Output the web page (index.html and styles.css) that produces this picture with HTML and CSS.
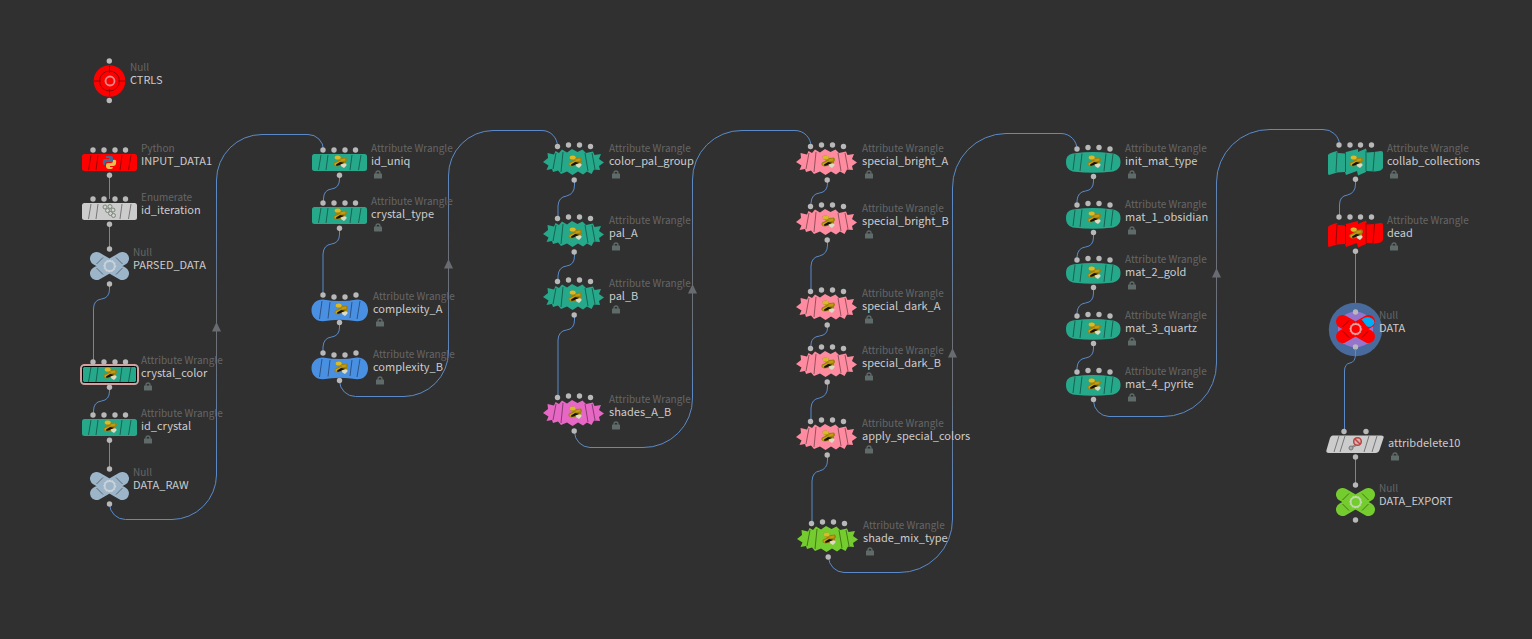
FILE: index.html
```html
<!DOCTYPE html>
<html lang="en">
<head>
<meta charset="utf-8">
<title>Node network</title>
<link rel="stylesheet" href="styles.css">
</head>
<body>
<svg class="defs" aria-hidden="true">
  <defs>
    <linearGradient id="fade" x1="0" y1="0" x2="0" y2="1">
      <stop offset="0.15" stop-color="#5a8ac8"/>
      <stop offset="0.45" stop-color="#6c7079"/>
      <stop offset="0.58" stop-color="#6c7079"/>
      <stop offset="0.85" stop-color="#5a8ac8"/>
    </linearGradient>

    <g id="hat">
      <path d="M-4.500-5.500Q-2-7.500 1.500-5.500L2-4 7-4.500Q9-2 7-.5L7 2 1 4-3 4.500Q-7 3-5 .5L-1-1.500-4-3Z" fill="#9c8010"/>
      <ellipse cx="-1.300" cy="-4.500" rx="3" ry="2" fill="#d9bb2a"/>
      <path d="M-4.500 1.500L1-1 2 .5-2 3.500Q-5 4-4.500 1.500Z" fill="#c9a514"/>
      <path d="M1-2.500L6-3.500 6.500-1.500 2-.5Z" fill="#c39a12"/>
      <path d="M-3 2.500L1 0 5 .8 1 3-2.500 4Z" fill="#171204"/>
      <path d="M1.500 2.500L6 1.200Q8.500 2 7 4L5 6 2.500 4.500Z" fill="#dcdcc4"/>
    </g>
    <g id="python">
      <path d="M-2-6H2Q4-6 4-4V-1Q4 0 2 0H-2Q-4 0-4 2V3Q-7 3-6-1-6-3-4-3H0V-4H-3Q-4-6-2-6Z" fill="#3f6d97"/>
      <path d="M4-2Q8-3 7 1 7 4 4 4H1V5H4Q4 7 2 7H0Q-3 7-3 4V3Q-3 1-1 1H2Q4 1 4-1Z" fill="#e8c14a"/>
    </g>
    <g id="boxes" fill="#d0d5cd" stroke="#7c857c">
      <circle cx="-4" cy="-4" r="2"/><circle cx="1" cy="-4.500" r="2"/><circle cx="-1.500" cy="-.5" r="2"/><circle cx="4" cy="-1" r="2"/><circle cx="1.500" cy="2.500" r="2"/><circle cx="4.500" cy="4.500" r="2"/>
    </g>

    <g id="four-in" fill="#b8b8b8">
      <circle cx="-16" cy="-12" r="2.700"/><circle cx="-5" cy="-12" r="2.700"/><circle cx="6" cy="-12" r="2.700"/><circle cx="16.500" cy="-12" r="2.700"/>
    </g>
    <g id="four-arc" fill="#b8b8b8">
      <circle cx="-16.500" cy="-15.500" r="2.700"/><circle cx="-5.500" cy="-17" r="2.700"/><circle cx="5.500" cy="-17" r="2.700"/><circle cx="16.500" cy="-15.500" r="2.700"/>
    </g>
    <g id="null-dots" fill="#b8b8b8">
      <circle cx=".5" cy="-17" r="2.700"/><circle cx=".5" cy="18" r="2.700"/>
    </g>

    <g id="bar">
      <rect x="-27" y="-8" width="55" height="17" rx="2.500" fill="currentColor"/>
      <path class="seam" d="M-18-7L-20.500 8M-11-7L-13 8M13-7L11 8M22-7L19.500 8"/>
      <use href="#four-in"/>
      <circle cx=".5" cy="13.200" r="2.700" fill="#b8b8b8"/>
    </g>
    <g id="capsule">
      <path d="M-17-10.500Q0-7.500 17-10.500C24-10.500 28-6 28 .3S24 11.500 17 11.300Q0 8-17 11.300C-24 11.500-28.500 6.500-28.500 .3S-24-10.500-17-10.500Z" fill="currentColor"/>
      <path class="seam" d="M-18-9L-20.500 9M-10-8L-12 8.500M12-8L10 8M20-9L17 9"/>
      <g fill="#b8b8b8"><circle cx="-17" cy="-15" r="2.700"/><circle cx="-6" cy="-13" r="2.700"/><circle cx="5" cy="-13" r="2.700"/><circle cx="16" cy="-15" r="2.700"/><circle cx="-.5" cy="12.500" r="2.700"/></g>
    </g>
    <g id="jagged">
      <path d="M-31 0L-26-4-26.500-9-20-7.500-18.500-11-15-9-12-12.500-7-9.500-2-13 3.500-10 8.500-12.500 12-9 19-10.500 20.500-7 27-8 25-3 30 .5 25 4 26 8 20 7.500 17.500 12 13 9.500 9 12.500 4 9.500-1.500 13-7 9.500-13 12-16 8.500-21 10-22 7-27.500 8-25.500 3.500Z" fill="currentColor"/>
      <path class="seam" d="M-18-9L-21 7M-11-10L-13 10M11-9L14 9M18-9L21 7"/>
      <use href="#four-arc"/>
      <circle cx=".2" cy="18" r="2.700" fill="#b8b8b8"/>
    </g>
    <g id="barrel">
      <path d="M-27 0C-27-6-24-8-18-8.800Q0-11 18-8.800C24-8 27.500-6 27.500 0S24 9 18 9.800Q0 11.500-18 9.800C-24 9-27 6-27 0Z" fill="currentColor"/>
      <path class="seam" d="M-18-8L-20 8M-11-8.500L-13 9M13-8.500L11 9M20-8L18 8"/>
      <g fill="#b8b8b8"><circle cx="-16" cy="-13" r="2.700"/><circle cx="-5" cy="-14.500" r="2.700"/><circle cx="6" cy="-14.500" r="2.700"/><circle cx="17" cy="-13" r="2.700"/><circle cx=".5" cy="14.500" r="2.700"/></g>
    </g>
    <g id="cracked">
      <path d="M-27-7Q-26-9-18-11L-17-9-10-8.500-9-10 3-13 3-10 11-13.500 12-9.500 19-10 26-11Q28-11 28-9V6Q27 9 20 9.500L11 9 11 10 3 13.500 2 9-9 13-10 10-18 10.500-26 13Q-27 13-27 11Z" fill="currentColor"/>
      <path class="seam" d="M-18-10L-19 10M-9.500-9V10M11-11V9M19.500-10L18 9"/>
      <g fill="#b8b8b8"><circle cx="-16" cy="-17" r="2.700"/><circle cx="-5" cy="-17" r="2.700"/><circle cx="5.500" cy="-17" r="2.700"/><circle cx="16.500" cy="-17" r="2.700"/><circle cx=".5" cy="17.300" r="2.700"/></g>
    </g>
    <g id="slanted">
      <path d="M-22.500-8.500H26Q29.500-8.500 28.500-6L24.500 6Q23.500 9 20.500 9H-26Q-29.500 9-28.500 6L-25-6Q-24-8.500-22.500-8.500Z" fill="currentColor"/>
      <path class="seam" d="M-16-8L-21 8M-10-8L-15 8M14-8L9 8M22-8L17 8"/>
      <g fill="#b8b8b8"><circle cx="-11" cy="-12.500" r="2.700"/><circle cx="11" cy="-12.500" r="2.700"/><circle cx=".5" cy="13" r="2.700"/></g>
      <path d="M-3 3L1 1" stroke="#8a8a8a" stroke-width="2"/>
      <circle cx="-4" cy="4" r="2" fill="#aaa" stroke="#777"/>
      <path d="M-2-6H6L7-1 4 2-2 0Z" fill="#ddb0b0"/>
      <circle cx="2.500" cy="-2.500" r="3.800" fill="none" stroke="#b84444" stroke-width="1.500"/>
      <path d="M0-5L5 0" stroke="#b84444" stroke-width="1.500"/>
    </g>
    <g id="cross">
      <path d="M-12.500-7.500L13.500 7.500M13.500-7.500L-12.500 7.500" stroke="currentColor" stroke-width="13" stroke-linecap="round"/>
      <path class="seam" d="M-12.500-2L-6-8.500M7-8.500L13.500-2M-12.500 2L-6 8.500M7 8.500L13.500 2"/>
      <circle cx=".7" cy="0" r="5" fill="none" stroke="#dadada" stroke-opacity=".75" stroke-width="1.800"/>
      <circle cx=".7" cy="0" r="6" fill="none" stroke="#fff" stroke-opacity=".35" stroke-dasharray="1.500 1.500"/>
      <use href="#null-dots"/>
    </g>
    <g id="target">
      <circle cx=".5" cy="0" r="15.800" fill="currentColor"/>
      <circle class="seam" cx=".5" cy="0" r="10"/>
      <path class="seam" d="M.5-15V-8M.5 8V15M-15 0H-8M9 0H16"/>
      <circle cx="1" cy="0" r="4.500" fill="none" stroke="#e88a8a" stroke-width="1.800"/>
      <g fill="#b8b8b8"><circle cx=".3" cy="-20" r="2.700"/><circle cx=".3" cy="19.500" r="2.700"/></g>
    </g>
    <g id="lock">
      <path d="M2 4V3Q2 1 4 1T6 3V4" fill="none" stroke="#5f6b68" stroke-width="1.300"/>
      <rect x="0" y="3.500" width="8" height="5" rx=".6" fill="#5f6b68"/>
    </g>
  </defs>
</svg>

<main class="network">
  <svg class="wires" aria-hidden="true">
    <g class="wire">
      <path d="M109.500 175V199M109.500 224V249M109.500 440V469"/>
      <path d="M109.500 284v5q0 9-8 10q-8 1-8 10V362"/>
      <path d="M109.500 387v4q0 9-8 10q-8 1-8 10V415"/>
      <path d="M339.500 175v4q0 9-8 10q-8 1-8 10V203"/>
      <path d="M339.500 228v6q0 9-8 10q-8 1-8.500 10V295"/>
      <path d="M339.500 323v4q0 9-8 10q-8 1-8.500 10V353"/>
      <path d="M574.500 180v5q0 9-8 11q-8 1-8.500 10V218"/>
      <path d="M574.500 252v4q0 9-8 10q-8 1-8.500 10V281"/>
      <path d="M574.500 315v5q0 9-8 10q-8 1-8.500 10V398"/>
      <path d="M827.500 180v3q0 9-8 10q-8 1-8.500 10V207"/>
      <path d="M827.500 240v5q0 9-8 11q-8 1-8.500 10V291"/>
      <path d="M827.500 325v3q0 7-8 8q-8 1-8.500 8V348"/>
      <path d="M827.500 382v5q0 9-8 11q-8 1-8.500 10V421"/>
      <path d="M827.500 455v5q0 9-8 11q-7 1-7.500 10V523"/>
      <path d="M1093.500 177v4q0 9-8 10q-8 1-8.500 10V205"/>
      <path d="M1093.500 233v4q0 9-8 10q-8 1-8.500 10V261"/>
      <path d="M1093.500 289v4q0 9-8 10q-8 1-8.500 10V317"/>
      <path d="M1093.500 344v4q0 9-8 10q-8 1-8.500 10V373"/>
      <path d="M1355.500 179v5q0 9-8 11q-8 1-8 10V217"/>
      <path d="M1355.500 252V313M1355.500 457V486"/>
    </g>
    <g class="wire loop">
      <path d="M109.500 504A16 16 0 0 0 125.500 519.500H172A45 45 0 0 0 216.500 475V180A45.500 46 0 0 1 262 134.500H308A15.500 15.500 0 0 1 323.500 150"/>
      <path d="M339.500 381A16 16 0 0 0 355.500 396.500H404A45 45 0 0 0 448.500 352V176A45 45 0 0 1 493 130.500H542A15.500 16 0 0 1 557.500 147"/>
      <path d="M574.500 432A16 16 0 0 0 590 447.500H643A49 49 0 0 0 692.500 398V180A49 49 0 0 1 742 130.500H795A16 16 0 0 1 811 147"/>
      <path d="M828.500 557A16 16 0 0 0 844 572.500H899A53 53 0 0 0 952.500 519V188A54 54 0 0 1 1006 133.500H1061A16 16 0 0 1 1077 150"/>
      <path d="M1093.500 401A16 16 0 0 0 1109 416.500H1163A53 53 0 0 0 1216.500 363V182A53 53 0 0 1 1270 129.500H1323A16 16 0 0 1 1339.500 145"/>
    </g>
    <path class="arrow" d="M212 331.500L216.500 322 221 331.500ZM444 268.500L448.500 259 453 268.500ZM688 293.500L692.500 284 697 293.500ZM948 357.500L952.500 348 957 357.500ZM1212 277.500L1216.500 268 1221 277.500Z"/>
  </svg>

  <div class="node target red" style="left:109px;top:81px"><svg class="shape" viewBox="-40 -30 80 60"><use href="#target"/></svg><div class="label"><span class="type">Null</span><span class="name">CTRLS</span></div></div>
  <div class="node bar red" style="left:109px;top:162px"><svg class="shape" viewBox="-40 -30 80 60"><use href="#bar"/><use href="#python"/></svg><div class="label"><span class="type">Python</span><span class="name">INPUT_DATA1</span></div></div>
  <div class="node bar silver" style="left:109px;top:211px"><svg class="shape" viewBox="-40 -30 80 60"><use href="#bar"/><use href="#boxes"/></svg><div class="label"><span class="type">Enumerate</span><span class="name">id_iteration</span></div></div>
  <div class="node cross steel" style="left:109px;top:266px"><svg class="shape" viewBox="-40 -30 80 60"><use href="#cross"/></svg><div class="label"><span class="type">Null</span><span class="name">PARSED_DATA</span></div></div>
  <div class="node bar green" style="left:109px;top:374px"><svg class="shape" viewBox="-40 -30 80 60"><rect x="-28" y="-9" width="57" height="19" rx="3.500" fill="#000" stroke="#d3a0a0" stroke-width="2"/><use href="#bar"/><rect x="-26.500" y="-7.500" width="54" height="16" rx="2" fill="none" stroke="#000"/><use href="#hat"/></svg><div class="label"><span class="type">Attribute Wrangle</span><span class="name">crystal_color</span><svg class="lock" viewBox="0 0 8 9"><use href="#lock"/></svg></div></div>
  <div class="node bar green" style="left:109px;top:427px"><svg class="shape" viewBox="-40 -30 80 60"><use href="#bar"/><use href="#hat"/></svg><div class="label"><span class="type">Attribute Wrangle</span><span class="name">id_crystal</span><svg class="lock" viewBox="0 0 8 9"><use href="#lock"/></svg></div></div>
  <div class="node cross steel" style="left:109px;top:486px"><svg class="shape" viewBox="-40 -30 80 60"><use href="#cross"/></svg><div class="label"><span class="type">Null</span><span class="name">DATA_RAW</span></div></div>

  <div class="node bar green" style="left:339px;top:162px"><svg class="shape" viewBox="-40 -30 80 60"><use href="#bar"/><use href="#hat"/></svg><div class="label"><span class="type">Attribute Wrangle</span><span class="name">id_uniq</span><svg class="lock" viewBox="0 0 8 9"><use href="#lock"/></svg></div></div>
  <div class="node bar green" style="left:339px;top:215px"><svg class="shape" viewBox="-40 -30 80 60"><use href="#bar"/><use href="#hat"/></svg><div class="label"><span class="type">Attribute Wrangle</span><span class="name">crystal_type</span><svg class="lock" viewBox="0 0 8 9"><use href="#lock"/></svg></div></div>
  <div class="node capsule blue" style="left:340px;top:310px"><svg class="shape" viewBox="-40 -30 80 60"><use href="#capsule"/><use href="#hat"/></svg><div class="label"><span class="type">Attribute Wrangle</span><span class="name">complexity_A</span><svg class="lock" viewBox="0 0 8 9"><use href="#lock"/></svg></div></div>
  <div class="node capsule blue" style="left:340px;top:368px"><svg class="shape" viewBox="-40 -30 80 60"><use href="#capsule"/><use href="#hat"/></svg><div class="label"><span class="type">Attribute Wrangle</span><span class="name">complexity_B</span><svg class="lock" viewBox="0 0 8 9"><use href="#lock"/></svg></div></div>

  <div class="node jagged green" style="left:574px;top:162px"><svg class="shape" viewBox="-40 -30 80 60"><use href="#jagged"/><use href="#hat"/></svg><div class="label"><span class="type">Attribute Wrangle</span><span class="name">color_pal_group</span><svg class="lock" viewBox="0 0 8 9"><use href="#lock"/></svg></div></div>
  <div class="node jagged green" style="left:574px;top:234px"><svg class="shape" viewBox="-40 -30 80 60"><use href="#jagged"/><use href="#hat"/></svg><div class="label"><span class="type">Attribute Wrangle</span><span class="name">pal_A</span><svg class="lock" viewBox="0 0 8 9"><use href="#lock"/></svg></div></div>
  <div class="node jagged green" style="left:574px;top:297px"><svg class="shape" viewBox="-40 -30 80 60"><use href="#jagged"/><use href="#hat"/></svg><div class="label"><span class="type">Attribute Wrangle</span><span class="name">pal_B</span><svg class="lock" viewBox="0 0 8 9"><use href="#lock"/></svg></div></div>
  <div class="node jagged magenta" style="left:574px;top:413px"><svg class="shape" viewBox="-40 -30 80 60"><use href="#jagged"/><use href="#hat"/></svg><div class="label"><span class="type">Attribute Wrangle</span><span class="name">shades_A_B</span><svg class="lock" viewBox="0 0 8 9"><use href="#lock"/></svg></div></div>

  <div class="node jagged pink" style="left:827px;top:162px"><svg class="shape" viewBox="-40 -30 80 60"><use href="#jagged"/><use href="#hat"/></svg><div class="label"><span class="type">Attribute Wrangle</span><span class="name">special_bright_A</span><svg class="lock" viewBox="0 0 8 9"><use href="#lock"/></svg></div></div>
  <div class="node jagged pink" style="left:827px;top:222px"><svg class="shape" viewBox="-40 -30 80 60"><use href="#jagged"/><use href="#hat"/></svg><div class="label"><span class="type">Attribute Wrangle</span><span class="name">special_bright_B</span><svg class="lock" viewBox="0 0 8 9"><use href="#lock"/></svg></div></div>
  <div class="node jagged pink" style="left:827px;top:307px"><svg class="shape" viewBox="-40 -30 80 60"><use href="#jagged"/><use href="#hat"/></svg><div class="label"><span class="type">Attribute Wrangle</span><span class="name">special_dark_A</span><svg class="lock" viewBox="0 0 8 9"><use href="#lock"/></svg></div></div>
  <div class="node jagged pink" style="left:827px;top:364px"><svg class="shape" viewBox="-40 -30 80 60"><use href="#jagged"/><use href="#hat"/></svg><div class="label"><span class="type">Attribute Wrangle</span><span class="name">special_dark_B</span><svg class="lock" viewBox="0 0 8 9"><use href="#lock"/></svg></div></div>
  <div class="node jagged pink" style="left:827px;top:437px"><svg class="shape" viewBox="-40 -30 80 60"><use href="#jagged"/><use href="#hat"/></svg><div class="label"><span class="type">Attribute Wrangle</span><span class="name">apply_special_colors</span><svg class="lock" viewBox="0 0 8 9"><use href="#lock"/></svg></div></div>
  <div class="node jagged lime" style="left:828px;top:539px"><svg class="shape" viewBox="-40 -30 80 60"><use href="#jagged"/><use href="#hat"/></svg><div class="label"><span class="type">Attribute Wrangle</span><span class="name">shade_mix_type</span><svg class="lock" viewBox="0 0 8 9"><use href="#lock"/></svg></div></div>

  <div class="node barrel green" style="left:1093px;top:162px"><svg class="shape" viewBox="-40 -30 80 60"><use href="#barrel"/><use href="#hat"/></svg><div class="label"><span class="type">Attribute Wrangle</span><span class="name">init_mat_type</span><svg class="lock" viewBox="0 0 8 9"><use href="#lock"/></svg></div></div>
  <div class="node barrel green" style="left:1093px;top:218px"><svg class="shape" viewBox="-40 -30 80 60"><use href="#barrel"/><use href="#hat"/></svg><div class="label"><span class="type">Attribute Wrangle</span><span class="name">mat_1_obsidian</span><svg class="lock" viewBox="0 0 8 9"><use href="#lock"/></svg></div></div>
  <div class="node barrel green" style="left:1093px;top:273px"><svg class="shape" viewBox="-40 -30 80 60"><use href="#barrel"/><use href="#hat"/></svg><div class="label"><span class="type">Attribute Wrangle</span><span class="name">mat_2_gold</span><svg class="lock" viewBox="0 0 8 9"><use href="#lock"/></svg></div></div>
  <div class="node barrel green" style="left:1093px;top:329px"><svg class="shape" viewBox="-40 -30 80 60"><use href="#barrel"/><use href="#hat"/></svg><div class="label"><span class="type">Attribute Wrangle</span><span class="name">mat_3_quartz</span><svg class="lock" viewBox="0 0 8 9"><use href="#lock"/></svg></div></div>
  <div class="node barrel green" style="left:1093px;top:385px"><svg class="shape" viewBox="-40 -30 80 60"><use href="#barrel"/><use href="#hat"/></svg><div class="label"><span class="type">Attribute Wrangle</span><span class="name">mat_4_pyrite</span><svg class="lock" viewBox="0 0 8 9"><use href="#lock"/></svg></div></div>

  <div class="node cracked green" style="left:1355px;top:162px"><svg class="shape" viewBox="-40 -30 80 60"><use href="#cracked"/><use href="#hat"/></svg><div class="label"><span class="type">Attribute Wrangle</span><span class="name">collab_collections</span><svg class="lock" viewBox="0 0 8 9"><use href="#lock"/></svg></div></div>
  <div class="node cracked red" style="left:1355px;top:234px"><svg class="shape" viewBox="-40 -30 80 60"><use href="#cracked"/><use href="#hat"/></svg><div class="label"><span class="type">Attribute Wrangle</span><span class="name">dead</span><svg class="lock" viewBox="0 0 8 9"><use href="#lock"/></svg></div></div>
  <div class="node cross red" style="left:1355px;top:329px"><svg class="shape" viewBox="-40 -30 80 60"><circle cx=".5" cy=".5" r="26.700" fill="#486a9c"/><path d="M.5-17.500Q10-17 18-9V10Q10 18 .5 18.500-9 18-17 10V-9Q-9-17 .5-17.500Z" fill="#9574cd"/><use href="#cross"/><path d="M6.500-9.500Q12-14 17-10.500T17-3Q14-1 11.500-3Z" fill="#00aef4"/></svg><div class="label"><span class="type">Null</span><span class="name">DATA</span></div></div>
  <svg class="wires" aria-hidden="true"><path class="wire" d="M1355.500 349v5q0 8-5.500 9-5.500 1-5.500 8V431"/></svg>
  <div class="node slanted silver untyped" style="left:1355px;top:444px"><svg class="shape" viewBox="-40 -30 80 60"><use href="#slanted"/></svg><div class="label"><span class="name">attribdelete10</span><svg class="lock" viewBox="0 0 8 9"><use href="#lock"/></svg></div></div>
  <div class="node cross lime" style="left:1355px;top:502px"><svg class="shape" viewBox="-40 -30 80 60"><use href="#cross"/></svg><div class="label"><span class="type">Null</span><span class="name">DATA_EXPORT</span></div></div>
</main>
</body>
</html>
```

FILE: styles.css
```css
body {
  margin: 0;
  background: #303030;
  font-family: "Noto Sans CJK SC", "Noto Sans", sans-serif;
  font-size: 11px;
  line-height: 12px;
}

.defs {
  position: absolute;
  width: 0;
  height: 0;
}

.network {
  position: relative;
  min-height: 100vh;
  overflow: hidden;
}

.wires {
  position: absolute;
  inset: 0;
  width: 100%;
  height: 100%;
}

.wire {
  fill: none;
  stroke: #5a8ac8;
  stroke-width: 1;
}

.loop {
  stroke: url(#fade);
}

.arrow {
  fill: #686b70;
}

.seam {
  fill: none;
  stroke: #000;
  stroke-opacity: .42;
  stroke-width: 1;
}

/* A node is anchored at the centre of its shape. */
.node {
  position: absolute;
  width: 0;
  height: 0;
}

.shape {
  position: absolute;
  left: -40px;
  top: -30px;
  width: 80px;
  height: 60px;
}

.label {
  position: absolute;
  left: 32px;
  top: -20px;
  display: flex;
  flex-direction: column;
  white-space: nowrap;
}

.untyped .label { top: -8px; }
.target .label { left: 21px; }
.cross .label { left: 24px; }
.jagged .label { left: 35px; }
.capsule .label,
.slanted .label { left: 33px; }

.type {
  color: #666;
  font-size: 10px;
}

.name { color: #ccc; }

.lock {
  width: 8px;
  height: 9px;
  margin: 4px 0 0 3px;
}

.red { color: #f00; }
.silver { color: #ccc; }
.steel { color: #9cb5c9; }
.green { color: #26a98b; }
.blue { color: #4a90e2; }
.magenta { color: #e667c4; }
.pink { color: #ff8ba0; }
.lime { color: #75cc2e; }
```
